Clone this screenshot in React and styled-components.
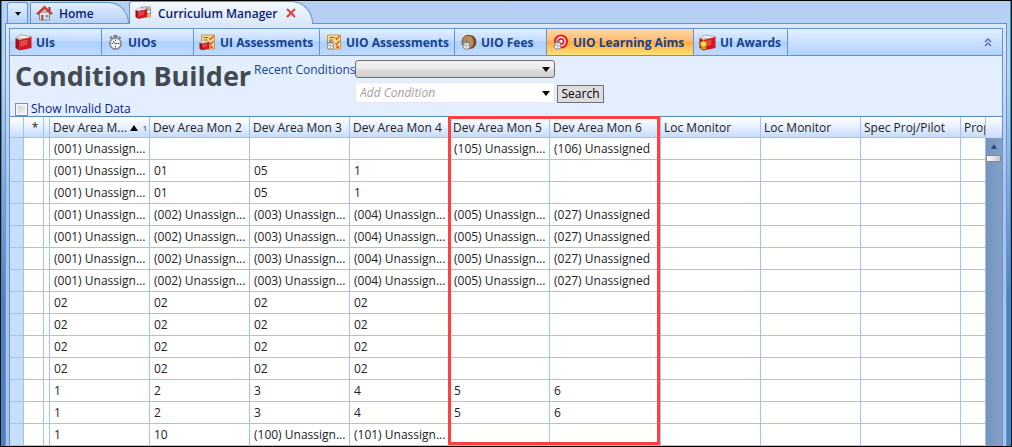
import React from "react";
import styled, { createGlobalStyle } from "styled-components";

const GlobalStyle = createGlobalStyle`
  * {
    box-sizing: border-box;
  }
  body {
    margin: 0;
    font-family: "Open Sans", "Noto Sans", sans-serif;
    font-size: 12px;
    color: #222;
  }
  button, input, select {
    font: inherit;
  }
`;

const AppFrame = styled.div`
  min-height: 100vh;
  border: 1px solid #000;
  background: #000;
`;

const WindowBody = styled.div`
  padding: 0 3px;
  border: solid #0aa5c8;
  border-width: 0 1px;
  background: linear-gradient(#b4cff3, #b9d4f6 70px, #4e7fc4 300px);
  overflow: hidden;
`;

const TabBar = styled.div`
  display: flex;
  align-items: flex-end;
  height: 22px;
  padding-left: 2px;
`;

const TabMenu = styled.button`
  display: flex;
  align-items: center;
  justify-content: center;
  width: 21px;
  height: 21px;
  margin-right: 2px;
  padding: 0;
  border: 1px solid #6593cf;
  border-bottom: 0;
  border-radius: 3px 3px 0 0;
  background: linear-gradient(#e3efff, #b5d2fa);
`;

const Tab = styled.div`
  display: flex;
  align-items: center;
  gap: 9px;
  height: ${(p) => (p.$active ? 23 : 21)}px;
  width: ${(p) => (p.$active ? 184 : 99)}px;
  margin-bottom: ${(p) => (p.$active ? -1 : 0)}px;
  padding: 0 5px;
  border: 1px solid #6593cf;
  border-bottom: 0;
  border-radius: 3px ${(p) => (p.$active ? "22px 0 0" : "26px 0 0")};
  background: ${(p) => (p.$active ? "linear-gradient(#f4f8ff, #dce8f8)" : "linear-gradient(#e3efff, #b5d2fa)")};
  color: #0b1c6b;
  font-weight: 600;
  white-space: nowrap;
  z-index: ${(p) => (p.$active ? 1 : 0)};
`;

const TabLink = styled.a`
  display: flex;
  align-items: center;
  gap: 6px;
  color: inherit;
  text-decoration: none;
`;

const CloseButton = styled.button`
  display: flex;
  padding: 0;
  border: 0;
  background: none;
`;

const Shell = styled.div`
  padding: 4px 3px 0;
  border: 1px solid #6593cf;
  border-bottom: 0;
  background: linear-gradient(#dce8f8, #a9c4ea 160px);
`;

const Panel = styled.main`
  border: 1px solid #6593cf;
  border-bottom: 0;
  background: #e3efff;
`;

const Toolbar = styled.nav`
  display: flex;
  height: 27px;
  border-bottom: 1px solid #6593cf;
  background: linear-gradient(#e3efff, #c8deff 60%, #afd2ff);
`;

const ToolLink = styled.a`
  display: flex;
  align-items: center;
  gap: 4px;
  width: ${(p) => p.$width}px;
  padding-left: 5px;
  border-right: 1px solid #6593cf;
  background: ${(p) =>
    p.$active
      ? "linear-gradient(#ffd9aa, #ffbb6e 45%, #ffab3f 50%, #fee17a)"
      : "linear-gradient(#e3efff, #c4dcff 45%, #add1ff 50%, #c0dbff)"};
  color: #15428b;
  font-weight: bold;
  text-decoration: none;
  white-space: nowrap;
`;

const Collapse = styled.button`
  display: flex;
  align-items: center;
  margin-left: auto;
  padding: 0 10px;
  border: 0;
  background: none;
`;

const Builder = styled.section`
  display: flex;
  align-items: flex-start;
  gap: 6px;
  height: 60px;
  padding: 4px 5px 0;
  color: #15428b;
  white-space: nowrap;
`;

const TitleBlock = styled.div`
  width: 233px;
`;

const Title = styled.h1`
  margin: 0;
  color: #444a52;
  font-size: 27px;
  line-height: 32px;
`;

const CheckLabel = styled.label`
  display: flex;
  align-items: center;
  gap: 3px;
  margin-top: 10px;
  color: #0b1c7b;
  line-height: 14px;
`;

const CheckBox = styled.input`
  appearance: none;
  width: 13px;
  height: 13px;
  margin: 0;
  border: 1px solid #8e8f8f;
  background: linear-gradient(135deg, #c8ccd2, #f8f8f8);
  box-shadow: inset 0 0 0 2px #f4f4f4;
`;

const RecentLabel = styled.label`
  width: 95px;
  line-height: 20px;
`;

const Fields = styled.div`
  display: flex;
  flex-direction: column;
  gap: 4px;
`;

const SearchRow = styled.div`
  display: flex;
  align-items: flex-end;
  gap: 2px;
`;

const SelectWrap = styled.div`
  display: grid;
  align-items: center;
  width: 200px;

  & > * {
    grid-area: 1 / 1;
  }
  & > svg {
    justify-self: end;
    margin-right: 5px;
    pointer-events: none;
  }
`;

const Select = styled.select`
  appearance: none;
  width: 100%;
  height: ${(p) => (p.$plain ? 21 : 18)}px;
  padding: 0 4px;
  border: 1px solid ${(p) => (p.$plain ? "#e3e9ef" : "#707070")};
  border-radius: ${(p) => (p.$plain ? 0 : 3)}px;
  background: ${(p) => (p.$plain ? "#fff" : "linear-gradient(#f2f2f2, #ebebeb 50%, #dddddd 50%, #cfcfcf)")};
  color: #a0a0a0;
  font-style: italic;
`;

const SearchButton = styled.button`
  width: 47px;
  height: 18px;
  padding: 0;
  border: 1px solid #707070;
  background: #ddd;
  color: #000;
  line-height: 16px;
`;

const GridArea = styled.div`
  position: relative;
  display: flex;
  border-top: 1px solid #5a8bc0;
  background: #fff;
`;

const GridClip = styled.div`
  flex: 1;
  min-width: 0;
  overflow: hidden;
`;

const Grid = styled.table`
  width: 100%;
  table-layout: fixed;
  border-collapse: separate;
  border-spacing: 0;
`;

const HeadCell = styled.th`
  height: 21px;
  padding: 2px 0 0 3px;
  border: solid #99c4ff;
  border-width: 0 1px 1px 0;
  background: linear-gradient(#fff, #edf4ff 40%, #c6dcfb);
  font-weight: normal;
  line-height: 18px;
  text-align: ${(p) => (p.$center ? "center" : "left")};
  white-space: nowrap;
  overflow: hidden;

  &:last-child {
    border-right: 0;
  }
`;

const SortedHead = styled.span`
  display: flex;
  align-items: center;
  gap: 3px;

  small {
    margin-left: 2px;
    font-size: 8px;
  }
`;

const Cell = styled.td`
  height: 22px;
  padding: 1px 3px 0 4px;
  border: solid #99c4ff;
  border-width: 0 1px 1px 0;
  background: ${(p) => (p.$marker ? "#c8deff" : "#fff")};
  line-height: 20px;
  white-space: nowrap;
  overflow: hidden;

  &:last-child {
    border-right: 0;
  }
`;

const ScrollTrack = styled.div`
  width: 17px;
  border-left: 1px solid #a9bdd6;
  background: linear-gradient(90deg, #7495c1, #809fc9);
`;

const ScrollHead = styled.div`
  height: 21px;
  background: linear-gradient(#fff, #c6dcfb);
`;

const ScrollUp = styled.button`
  display: flex;
  justify-content: center;
  align-items: center;
  width: 100%;
  height: 17px;
  padding: 0;
  border: 0;
  background: none;
`;

const ScrollThumb = styled.div`
  height: 7px;
  margin-right: 1px;
  border: 1px solid #8a8a8a;
  background: linear-gradient(90deg, #fff, #c8c8c8);
`;

const Highlight = styled.div`
  position: absolute;
  top: -1px;
  bottom: 1px;
  left: 438px;
  width: 212px;
  border: 3px solid #ff4141;
  pointer-events: none;
`;

const Book = () => (
  <>
    <path d="M0 4.500L5 1l11 1.500L13 5z" fill="#f4eee8" stroke="#8d7f7c" strokeWidth=".6" />
    <path d="M0 4.500l4 1.500v10.500l-4-2.500z" fill="#a30d14" />
    <path d="M4 6l12-3v11L4 16.500z" fill="#cf1820" />
    <path d="M5 7l7-1.500v5L5 13z" fill="#e84447" />
  </>
);

const Watch = () => (
  <>
    <path d="M6 1h4v3H6zM2 3l2-1 1 2-2 1zM12 2l2 2-2 1-1-1z" fill="#777d84" />
    <circle cx="8" cy="9.5" r="5.6" fill="#f6f7f9" stroke="#82888f" strokeWidth="1.6" />
    <path d="M8 5.500v1.500M8 12v1.500M4 9.500h1.500M10.500 9.500H12M5.500 7L8 10l2-1" fill="none" stroke="#3e444c" />
  </>
);

const Sheet = () => (
  <>
    <path d="M2 1h13v14H2z" fill="#fbdf91" stroke="#c29a4b" />
    <path d="M4 3.500h5M4 6h4M4 8.500h4" stroke="#5a4a32" strokeWidth=".8" />
    <path d="M10 4l1 1.500L14 2M10 9l1 1.500L14 7M11 12l2 2m0-2l-2 2" fill="none" stroke="#f0441e" strokeWidth="1.200" />
  </>
);

const icons = {
  book: <Book />,
  watch: <Watch />,
  bookSheet: (
    <>
      <Sheet />
      <g transform="translate(0 6) scale(.62)"><Book /></g>
    </>
  ),
  watchSheet: (
    <>
      <Sheet />
      <g transform="translate(0 6) scale(.62)"><Watch /></g>
    </>
  ),
  fees: (
    <>
      <ellipse cx="9.500" cy="8" rx="6.500" ry="7" fill="#74502f" />
      <ellipse cx="7.500" cy="8" rx="6" ry="6.800" fill="#b98d5c" stroke="#74502f" />
      <g transform="translate(1 6) scale(.62)"><Watch /></g>
    </>
  ),
  target: (
    <>
      <circle cx="8.500" cy="7.500" r="6" fill="#fff" stroke="#f01a1a" strokeWidth="2.200" />
      <circle cx="8.500" cy="7.500" r="2.600" fill="#fff" stroke="#f01a1a" strokeWidth="1.800" />
      <g transform="translate(0 6) scale(.62)"><Watch /></g>
    </>
  ),
  award: (
    <>
      <Book />
      <path d="M2 12l-1 4 3-1 3 1-1-4z" fill="#d49b08" />
      <circle cx="4" cy="10" r="3" fill="#ffe04a" stroke="#c68f08" />
    </>
  ),
  home: (
    <>
      <path d="M3 7h10v8H3z" fill="#e4e4e4" stroke="#888" />
      <path d="M4.500 10H7v5H4.500z" fill="#9c6b4b" />
      <path d="M9 10h3v2.500H9z" fill="#6f93d8" />
      <path d="M12 2h2v4h-2z" fill="#a73225" />
      <path d="M0 8.500L8 1l8 7.500-1.500 1L8 4 1.500 9.500z" fill="#e53d31" stroke="#a72219" strokeWidth=".6" />
    </>
  ),
  manager: (
    <>
      <path d="M6 2h9v10H6z" fill="#fff" stroke="#7394c5" />
      <path d="M10 2h5v3h-5zM11 9h4v3h-4z" fill="#f1ba52" />
      <path d="M6 5h9M6 8.500h9M11.500 2v10" stroke="#7394c5" />
      <g transform="translate(0 2) scale(.72)"><Book /></g>
    </>
  ),
};

const Icon = ({ name }) => (
  <svg width="17" height="17" viewBox="0 0 16 17" aria-hidden="true">
    {icons[name]}
  </svg>
);

const Arrow = ({ up, small, color = "#000" }) => (
  <svg width={small ? 6 : 8} height={small ? 5 : 6} viewBox="0 0 8 6" aria-hidden="true">
    <path d={up ? "M0 6L4 0l4 6z" : "M0 1h8L4 6z"} fill={color} />
  </svg>
);

const tools = [
  { label: "UIs", icon: "book", width: 92 },
  { label: "UIOs", icon: "watch", width: 92 },
  { label: "UI Assessments", icon: "bookSheet", width: 126 },
  { label: "UIO Assessments", icon: "watchSheet", width: 135 },
  { label: "UIO Fees", icon: "fees", width: 92 },
  { label: "UIO Learning Aims", icon: "target", width: 147, active: true },
  { label: "UI Awards", icon: "award", width: 94 },
];

const columns = [
  "Dev Area Mon 2",
  "Dev Area Mon 3",
  "Dev Area Mon 4",
  "Dev Area Mon 5",
  "Dev Area Mon 6",
  "Loc Monitor",
  "Loc Monitor",
  "Spec Proj/Pilot",
  "Prop",
];

const widths = [14, 20, 6, 100, 100, 100, 100, 100, 111, 100, 100, 100];

// only the sixth column is wide enough for the full word
const unassigned = (...codes) =>
  codes.map((code, i) => code && `(${code}) ${i === 5 ? "Unassigned" : "Unassign..."}`);

const rows = [
  unassigned("001", "", "", "", "105", "106"),
  [...unassigned("001"), "01", "05", "1"],
  [...unassigned("001"), "01", "05", "1"],
  ...Array(4).fill(unassigned("001", "002", "003", "004", "005", "027")),
  ...Array(4).fill(["02", "02", "02", "02"]),
  ["1", "2", "3", "4", "5", "6"],
  ["1", "2", "3", "4", "5", "6"],
  ["1", "10", ...unassigned("100", "101")],
];

function ConditionBuilder() {
  return (
    <Builder>
      <TitleBlock>
        <Title>Condition Builder</Title>
        <CheckLabel>
          <CheckBox type="checkbox" />
          Show Invalid Data
        </CheckLabel>
      </TitleBlock>
      <RecentLabel htmlFor="recent">Recent Conditions</RecentLabel>
      <Fields>
        <SelectWrap>
          <Select id="recent" />
          <Arrow />
        </SelectWrap>
        <SearchRow>
          <SelectWrap>
            <Select $plain aria-label="Add Condition">
              <option>Add Condition</option>
            </Select>
            <Arrow />
          </SelectWrap>
          <SearchButton>Search</SearchButton>
        </SearchRow>
      </Fields>
    </Builder>
  );
}

function DataGrid() {
  return (
    <GridArea>
      <GridClip>
        <Grid>
          <colgroup>
            {widths.map((w, i) => (
              <col key={i} width={w} />
            ))}
            <col />
          </colgroup>
          <thead>
            <tr>
              <HeadCell />
              <HeadCell $center>*</HeadCell>
              <HeadCell />
              <HeadCell>
                <SortedHead>
                  Dev Area M...
                  <Arrow up />
                  <small>1</small>
                </SortedHead>
              </HeadCell>
              {columns.map((name, i) => (
                <HeadCell key={i}>{name}</HeadCell>
              ))}
            </tr>
          </thead>
          <tbody>
            {rows.map((row, r) => (
              <tr key={r}>
                <Cell $marker />
                <Cell />
                <Cell />
                {Array.from({ length: 10 }, (_, c) => (
                  <Cell key={c}>{row[c]}</Cell>
                ))}
              </tr>
            ))}
          </tbody>
        </Grid>
      </GridClip>
      <ScrollTrack>
        <ScrollHead />
        <ScrollUp aria-label="Scroll up">
          <Arrow up small color="#2c3f6b" />
        </ScrollUp>
        <ScrollThumb />
      </ScrollTrack>
      <Highlight />
    </GridArea>
  );
}

function App() {
  return (
    <AppFrame>
      <GlobalStyle />
      <WindowBody>
        <TabBar>
          <TabMenu aria-label="Open tabs">
            <Arrow small />
          </TabMenu>
          <Tab>
            <TabLink href="#home">
              <Icon name="home" />
              Home
            </TabLink>
          </Tab>
          <Tab $active>
            <TabLink href="#curriculum">
              <Icon name="manager" />
              Curriculum Manager
            </TabLink>
            <CloseButton aria-label="Close tab">
              <svg width="10" height="10" viewBox="0 0 10 10">
                <path d="M1 1l8 8M9 1L1 9" stroke="#cf4a45" strokeWidth="2.200" />
              </svg>
            </CloseButton>
          </Tab>
        </TabBar>
        <Shell>
          <Panel>
            <Toolbar>
              {tools.map((tool) => (
                <ToolLink key={tool.label} href="#" $width={tool.width} $active={tool.active}>
                  <Icon name={tool.icon} />
                  {tool.label}
                </ToolLink>
              ))}
              <Collapse aria-label="Collapse toolbar">
                <svg width="8" height="9" viewBox="0 0 8 9" fill="none" stroke="#4a6fa8" strokeWidth="1.400">
                  <path d="M1 4l3-3 3 3M1 8l3-3 3 3" />
                </svg>
              </Collapse>
            </Toolbar>
            <ConditionBuilder />
            <DataGrid />
          </Panel>
        </Shell>
      </WindowBody>
    </AppFrame>
  );
}

export default App;
